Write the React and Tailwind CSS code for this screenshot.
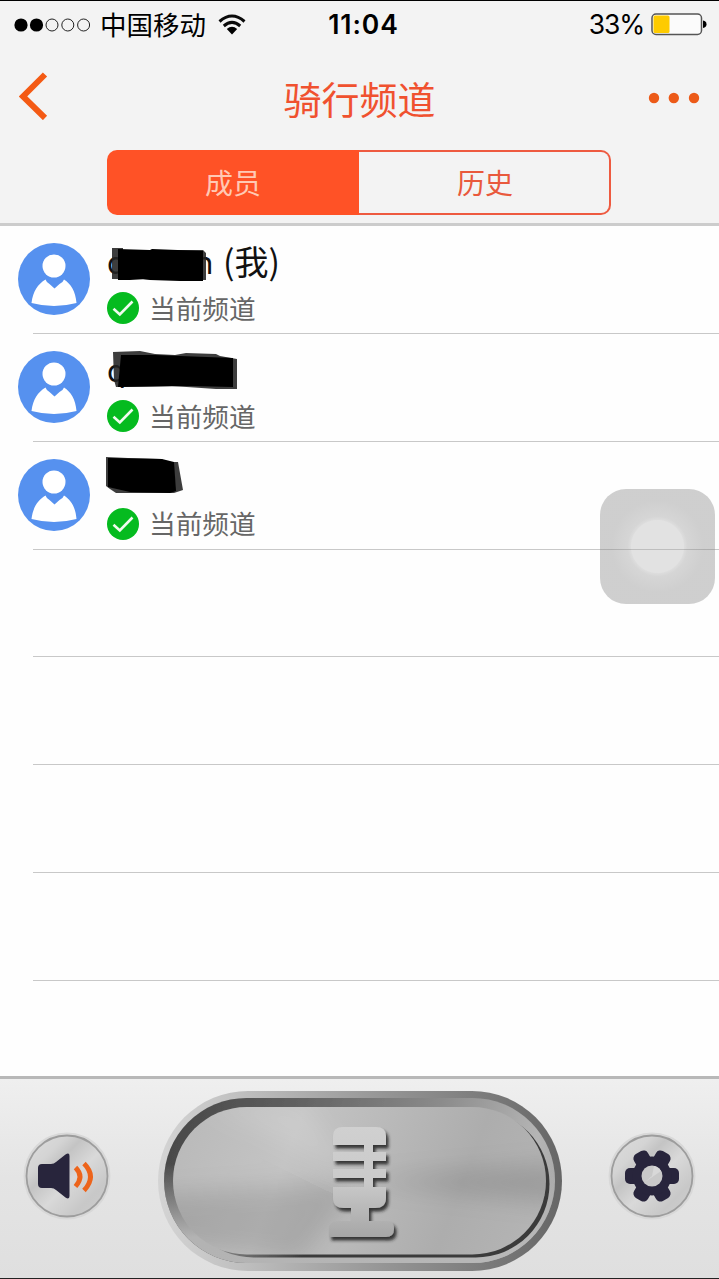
const rows = [
  {
    first: 'q',
    last: 'n',
    note: '(我)',
    box: '103 243 150 56',
    shade: '112,248 123,248 123,250 203,250 206,253 206,280 112,279',
    ink: '118,249 150,250 152,249 203,251 203,281 180,281 150,280 143,279 130,280 118,280',
  },
  {
    first: 'q',
    box: '103 351 150 56',
    shade: '113,352 140,351 155,354 175,355 186,353 216,354 220,356 237,359 237,389 216,389 172,386 116,387 114,380',
    ink: '121,355 155,355 180,356 233,358 233,387 190,386 118,387',
  },
  {
    box: '103 459 150 56',
    shade: '106,457 128,458 162,459 164,462 178,462 183,490 174,493 116,493 110,489 106,486',
    ink: '108,458 162,459 174,462 176,491 170,493 130,492 108,487',
  },
];

function Avatar() {
  return (
    <svg className="h-18 w-18 shrink-0" viewBox="0 0 72 72">
      <circle cx="36" cy="36" r="36" fill="#5691ef" />
      <circle cx="36" cy="23" r="11.5" fill="#fff" />
      <path d="M13.5 60C15 48 20 41 27.500 36.500Q28.500 39.500 31.500 41L36.500 45.500L41.500 41Q45 39.500 46 36.500C53 41 57.500 48 58.500 60Q36 66 13.500 60Z" fill="#fff" />
    </svg>
  );
}

function Check() {
  return (
    <svg className="h-8 w-8 shrink-0" viewBox="0 0 32 32">
      <circle cx="16" cy="16" r="16" fill="#05bb1f" />
      <path d="M6.500 16.800L12.800 22.500L25.500 9.500" fill="none" stroke="#f0fbef" strokeWidth="2.600" />
    </svg>
  );
}

function MemberRow({ row }) {
  return (
    <div className="flex flex-1 items-start pl-[18px] pt-[17.300px]">
      <Avatar />
      <div className="relative ml-[17px] flex-1">
        <div className="flex h-10 items-center pb-[1px] font-[Inter,'Noto_Sans_CJK_SC',sans-serif] text-[31px] leading-10 text-[#111]">
          {row.first && <span className="w-[88px]">{row.first}</span>}
          {row.last && <span className="w-[28px]">{row.last}</span>}
          {row.note && <span className="pb-[4px] font-['Noto_Sans_CJK_SC',sans-serif] text-[34px]">{row.note}</span>}
        </div>
        <svg className="absolute left-[-4px] top-0 h-[56px] w-[150px]" viewBox={row.box} overflow="visible">
          <polygon points={row.shade} fill="#222" fillOpacity="0.88" />
          <polygon points={row.ink} fill="#000" />
        </svg>
        <div className="mt-[9px] flex h-8 items-center gap-[10px] text-[26.700px] leading-8 text-[#666]">
          <Check />
          <span className="pb-[1px]">当前频道</span>
        </div>
      </div>
    </div>
  );
}

function StatusBar() {
  return (
    <div className="flex h-[47px] items-center text-[26.500px] text-black">
      <div className="flex flex-1 items-center pl-[14px]">
        <svg className="h-4 w-[77px]" viewBox="0 0 77 16">
          <circle cx="7" cy="8" r="6.600" />
          <circle cx="22.500" cy="8" r="6.600" />
          {[38, 53.8, 69.6].map((x) => (
            <circle key={x} cx={x} cy="8" r="6" fill="none" stroke="#222" strokeWidth="1" />
          ))}
        </svg>
        <span className="ml-[9px] pb-[2px]">中国移动</span>
        <svg className="mb-[1px] ml-[12px] h-[21px] w-[28px]" viewBox="0 0 28 21">
          <g fill="none" stroke="#0a0a0a" strokeWidth="3">
            <path d="M1.500 7.500Q14 -3.500 26.500 7.500" />
            <path d="M5.800 12Q14 4.800 22.200 12" />
          </g>
          <path d="M8.800 15Q14 10.500 19.200 15L14 20.500Z" />
        </svg>
      </div>
      <div className="pl-[6px] pt-[1px] font-[Inter] text-[26.500px] font-semibold tracking-[0.900px]">11:04</div>
      <div className="flex flex-1 items-center justify-end pr-[12px]">
        <span className="pt-[1px] font-[Inter] text-[26.500px] tracking-[-1.200px]">33%</span>
        <svg className="ml-[7px] h-[23px] w-[56px]" viewBox="0 0 56 23">
          <rect x="1" y="1" width="49.500" height="20.500" rx="4" fill="#fbfbfb" stroke="#555" strokeWidth="1.500" />
          <rect x="2.500" y="2.500" width="16" height="17.500" rx="1.500" fill="#fecb00" />
          <path d="M52 7.500Q55.500 8 55.500 11.300T52 15Z" />
        </svg>
      </div>
    </div>
  );
}

function Header() {
  return (
    <header className="h-[226px] shrink-0 border-t border-b-3 border-t-black border-b-[#ccc] bg-[#f3f3f3]">
      <StatusBar />
      <div className="flex h-[102px] items-center justify-between px-[19px]">
        <svg className="mt-[-6px] h-12 w-[50px]" viewBox="0 0 50 48">
          <path d="M26 2.500L4 24.500L26 46" fill="none" stroke="#f45a14" strokeWidth="6" />
        </svg>
        <h1 className="pb-[2px] pl-[2px] text-[38px] leading-[50px] text-[#f0512f]">骑行频道</h1>
        <svg className="mt-[-2px] h-3 w-[52px]" viewBox="0 0 52 12">
          {[6, 25.8, 46].map((x) => (
            <circle key={x} cx={x} cy="6" r="5.200" fill="#ec5a18" />
          ))}
        </svg>
      </div>
      <div className="ml-[107px] flex h-[65px] w-[504px] text-[28px] leading-8">
        <div className="flex w-[252px] items-center justify-center rounded-l-[10px] bg-[#ff5226] pb-[2px] text-[#ffc9b4]">成员</div>
        <div className="flex flex-1 items-center justify-center rounded-r-[10px] border-2 border-l-0 border-[#ee5a40] pb-[2px] pl-[2px] text-[#e9593c]">历史</div>
      </div>
    </header>
  );
}

function RoundButton({ id, children }) {
  return (
    <svg className="h-[92px] w-[92px]" viewBox="0 0 92 92">
      <defs>
        <linearGradient id={id} x1="0" y1="0" x2="1" y2="1">
          <stop offset="0" stopColor="#dedede" />
          <stop offset="0.25" stopColor="#d4d4d4" />
          <stop offset="0.36" stopColor="#c4c4c4" />
          <stop offset="0.55" stopColor="#d9d9d9" />
          <stop offset="0.78" stopColor="#c8c8c8" />
          <stop offset="1" stopColor="#cecece" />
        </linearGradient>
      </defs>
      <circle cx="46" cy="46" r="43.500" fill="#d8d8d8" />
      <circle cx="46" cy="46" r="40.500" fill={`url(#${id})`} stroke="#9d9d9d" strokeWidth="1.800" />
      {children}
    </svg>
  );
}

function TalkButton() {
  return (
    <svg className="h-[182px] w-[406px]" viewBox="157 1090 406 182">
      <defs>
        <linearGradient id="rim" x1="158" x2="562" y1="0" y2="0" gradientUnits="userSpaceOnUse">
          <stop offset="0" stopColor="#d4d4d4" />
          <stop offset="0.2" stopColor="#c0c0c0" />
          <stop offset="0.55" stopColor="#969696" />
          <stop offset="0.85" stopColor="#777" />
          <stop offset="1" stopColor="#666" />
        </linearGradient>
        <linearGradient id="groove" x1="170" x2="555" y1="1120" y2="1225" gradientUnits="userSpaceOnUse">
          <stop offset="0" stopColor="#484848" />
          <stop offset="0.25" stopColor="#5c5c5c" />
          <stop offset="0.65" stopColor="#8c8c8c" />
          <stop offset="0.9" stopColor="#b5b5b5" />
          <stop offset="1" stopColor="#a4a4a4" />
        </linearGradient>
        <linearGradient id="grooveFade" x1="0" x2="0" y1="1098" y2="1262" gradientUnits="userSpaceOnUse">
          <stop offset="0.4" stopColor="#b8b8b8" stopOpacity="0" />
          <stop offset="0.85" stopColor="#b8b8b8" stopOpacity="0.95" />
        </linearGradient>
        <linearGradient id="edge" x1="220" x2="300" y1="1107" y2="1258" gradientUnits="userSpaceOnUse">
          <stop offset="0" stopColor="#777" stopOpacity="0" />
          <stop offset="0.55" stopColor="#777" stopOpacity="0.2" />
          <stop offset="1" stopColor="#3a3a3a" />
        </linearGradient>
        <linearGradient id="face" x1="180" x2="540" y1="1110" y2="1250" gradientUnits="userSpaceOnUse">
          <stop offset="0" stopColor="#b9b9b9" />
          <stop offset="0.3" stopColor="#c4c4c4" />
          <stop offset="0.5" stopColor="#bababa" />
          <stop offset="0.75" stopColor="#adadad" />
          <stop offset="1" stopColor="#b5b5b5" />
        </linearGradient>
        <linearGradient id="mic" x1="0" x2="0" y1="1127" y2="1237" gradientUnits="userSpaceOnUse">
          <stop offset="0" stopColor="#d0d0d0" />
          <stop offset="0.5" stopColor="#cacaca" />
          <stop offset="1" stopColor="#a6a6a6" />
        </linearGradient>
        <clipPath id="faceClip">
          <rect x="173" y="1107" width="373" height="147.500" rx="73.750" />
        </clipPath>
        <filter id="soft" x="-20%" y="-60%" width="140%" height="220%">
          <feGaussianBlur stdDeviation="12" />
        </filter>
        <filter id="softEdge">
          <feGaussianBlur stdDeviation="0.4" />
        </filter>
        <filter id="lift" x="-30%" y="-20%" width="170%" height="150%">
          <feDropShadow dx="2.500" dy="3.500" stdDeviation="1.500" floodColor="#222" floodOpacity="0.850" />
        </filter>
      </defs>
      <rect x="158" y="1091" width="404" height="180" rx="90" fill="url(#rim)" />
      <g filter="url(#softEdge)">
        <rect x="164" y="1098" width="391" height="165" rx="82.500" fill="url(#groove)" />
        <rect x="164" y="1098" width="391" height="165" rx="82.500" fill="url(#grooveFade)" />
        <rect x="180" y="1110" width="369.500" height="147.500" rx="73.750" fill="url(#edge)" />
      </g>
      <rect x="173" y="1107" width="373" height="147.500" rx="73.750" fill="url(#face)" />
      <g clipPath="url(#faceClip)">
        <g filter="url(#soft)">
          <path d="M360 1181L150 1195V1245L300 1262Z" fill="#000" fillOpacity="0.120" />
          <path d="M360 1181L570 1162V1205Z" fill="#000" fillOpacity="0.130" />
          <path d="M360 1181L200 1100H300Z" fill="#fff" fillOpacity="0.120" />
        </g>
      </g>
      <path
        d="M333 1145V1136Q333 1127 343 1127H376Q386 1127 386 1136V1145H373V1152H386V1161H373V1169H386V1178H373V1187H386V1198Q386 1208 375 1208H369V1221H387Q394 1221 394 1229Q394 1237 386 1237H329V1229Q329 1221 337 1221H351V1208H344Q333 1208 333 1198V1187H364V1178H333V1169H364V1161H333V1152H364V1145Z"
        fill="url(#mic)"
        filter="url(#lift)"
      />
    </svg>
  );
}

function Toolbar() {
  return (
    <footer className="flex h-[203px] shrink-0 items-center justify-between border-t-3 border-b border-t-[#b8b8b8] border-b-[#222] bg-linear-to-b from-[#efefef] via-[#e4e4e4] to-[#dfdfdf] px-[21px] pt-[4px]">
      <div className="mt-[-9px]">
        <RoundButton id="speaker">
          <path d="M17 38Q17 34 21 34H30Q33 34 35 32L44.500 24.500Q48.500 22 48.500 26V66Q48.500 70 44.500 67.500L35 60Q33 58 30 58H21Q17 58 17 54Z" fill="#28253c" />
          <g fill="none" stroke="#ed641b" strokeWidth="4.800">
            <path d="M54.500 37.500Q63.500 46.500 54.500 56.500" />
            <path d="M63 33.500Q76 46.500 63 60.500" />
          </g>
        </RoundButton>
      </div>
      <TalkButton />
      <div className="mt-[-9px]">
        <RoundButton id="settings">
          <g fill="#28253c">
            {[0, 60, 120].map((a) => (
              <rect key={a} x="19" y="38" width="54" height="16" rx="5" transform={`rotate(${a} 46 46)`} />
            ))}
            <circle cx="46" cy="46" r="19.500" />
          </g>
          <circle cx="46" cy="46" r="10.500" fill="#c9c9c9" />
          <path d="M39 52L46 46L48 36A10.500 10.500 0 0 1 55 41Z" fill="#d8d8d8" />
        </RoundButton>
      </div>
    </footer>
  );
}

export default function App() {
  return (
    <div className="relative flex h-[1279px] w-[719px] flex-col overflow-hidden bg-[#fefefe] font-['Noto_Sans_CJK_SC',sans-serif]">
      <Header />
      <main className="min-h-0 flex-1 overflow-hidden">
        {Array.from({ length: 7 }).map((_, i) => (
          <div key={i} className="flex h-[107.850px] flex-col justify-end">
            {rows[i] && <MemberRow row={rows[i]} />}
            <div className="ml-[33px] h-px shrink-0 bg-[#c8c8c8]" />
          </div>
        ))}
      </main>
      <Toolbar />
      {/* Floating assistive button */}
      <div className="absolute left-[600px] top-[489px] h-[115px] w-[115px] rounded-[26px] bg-[radial-gradient(circle,#aaa5_0,#aaa5_26px,#9995_27px,#9996_30px,#8886_46px,#8886_100%)]" />
    </div>
  );
}
